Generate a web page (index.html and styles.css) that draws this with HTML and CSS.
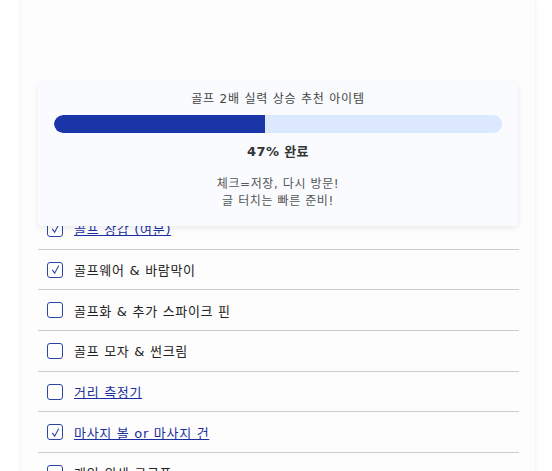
FILE: index.html
```html
<!DOCTYPE html>
<html lang="ko">
<head>
<meta charset="utf-8">
<link rel="stylesheet" href="styles.css">
</head>
<body>
<div class="page">
  <div class="progress-card">
    <div class="progress-title">골프 2배 실력 상승 추천 아이템</div>
    <div class="bar"><div class="bar-fill" style="width:47%"></div></div>
    <div class="percent">47% 완료</div>
    <div class="note">체크=저장, 다시 방문!<br>글 터치는 빠른 준비!</div>
  </div>
  <ul class="list">
    <li class="row"><span class="box checked"><svg viewBox="0 0 16 16" class="tick"><polyline points="4,8.5 7,12.5 12,3"/></svg></span><a class="link" href="#">골프 장갑 (여분)</a></li>
    <li class="row"><span class="box checked"><svg viewBox="0 0 16 16" class="tick"><polyline points="4,8.5 7,12.5 12,3"/></svg></span><span class="label">골프웨어 &amp; 바람막이</span></li>
    <li class="row"><span class="box"></span><span class="label">골프화 &amp; 추가 스파이크 핀</span></li>
    <li class="row"><span class="box"></span><span class="label">골프 모자 &amp; 썬크림</span></li>
    <li class="row"><span class="box"></span><a class="link" href="#">거리 측정기</a></li>
    <li class="row"><span class="box checked"><svg viewBox="0 0 16 16" class="tick"><polyline points="4,8.5 7,12.5 12,3"/></svg></span><a class="link" href="#">마사지 볼 or 마사지 건</a></li>
    <li class="row"><span class="box"></span><span class="label">개인 위생 구급품</span></li>
  </ul>
</div>
</body>
</html>
```
FILE: styles.css
```css
html, body {
  margin: 0;
  padding: 0;
  background: #ffffff;
  height: 471px;
  overflow: hidden;
}
body {
  font-family: "DejaVu Sans", "Noto Sans CJK KR", sans-serif;
}
.page {
  position: relative;
  margin-left: 21px;
  width: 481px;
  padding: 209px 16px 0 17px;
  min-height: 600px;
  background: #fdfdfd;
  box-shadow: 0 0 5px rgba(0, 0, 0, 0.08);
}
.progress-card {
  position: absolute;
  top: 82px;
  left: 17px;
  width: 448px;
  padding: 8px 16px 16px 16px;
  background: #f9fbff;
  border-radius: 4px;
  box-shadow: 0 2px 6px rgba(0, 0, 0, 0.08);
  text-align: center;
  z-index: 2;
}
.progress-title {
  font-size: 12px;
  line-height: 18px;
  letter-spacing: 0.8px;
  color: #444;
}
.bar {
  margin-top: 7px;
  height: 18px;
  border-radius: 9px;
  background: #dbe8fd;
  overflow: hidden;
}
.bar-fill {
  height: 100%;
  background: #1935a8;
  border-radius: 9px 0 0 9px;
}
.percent {
  margin-top: 10px;
  font-size: 13px;
  line-height: 18px;
  font-weight: 700;
  letter-spacing: 0.4px;
  color: #333;
}
.note {
  margin-top: 15px;
  font-size: 12px;
  line-height: 17px;
  letter-spacing: 0.6px;
  color: #555;
}
.list {
  list-style: none;
  margin: 0;
  padding: 0;
}
.row {
  display: flex;
  align-items: center;
  height: 39.7px;
  border-bottom: 1px solid #cccccc;
  padding-left: 9px;
  font-size: 13px;
  letter-spacing: 0.7px;
}
.box {
  box-sizing: border-box;
  width: 16px;
  height: 16px;
  border: 1.5px solid #2b44a8;
  border-radius: 3px;
  background: #fff;
  margin-right: 11px;
  flex: none;
  display: flex;
  align-items: center;
  justify-content: center;
}
.tick {
  width: 13px;
  height: 13px;
  fill: none;
  stroke: #2b44a8;
  stroke-width: 1.3;
}
.label {
  color: #222;
}
.link {
  color: #1a2ea0;
  text-decoration: underline;
}
```
